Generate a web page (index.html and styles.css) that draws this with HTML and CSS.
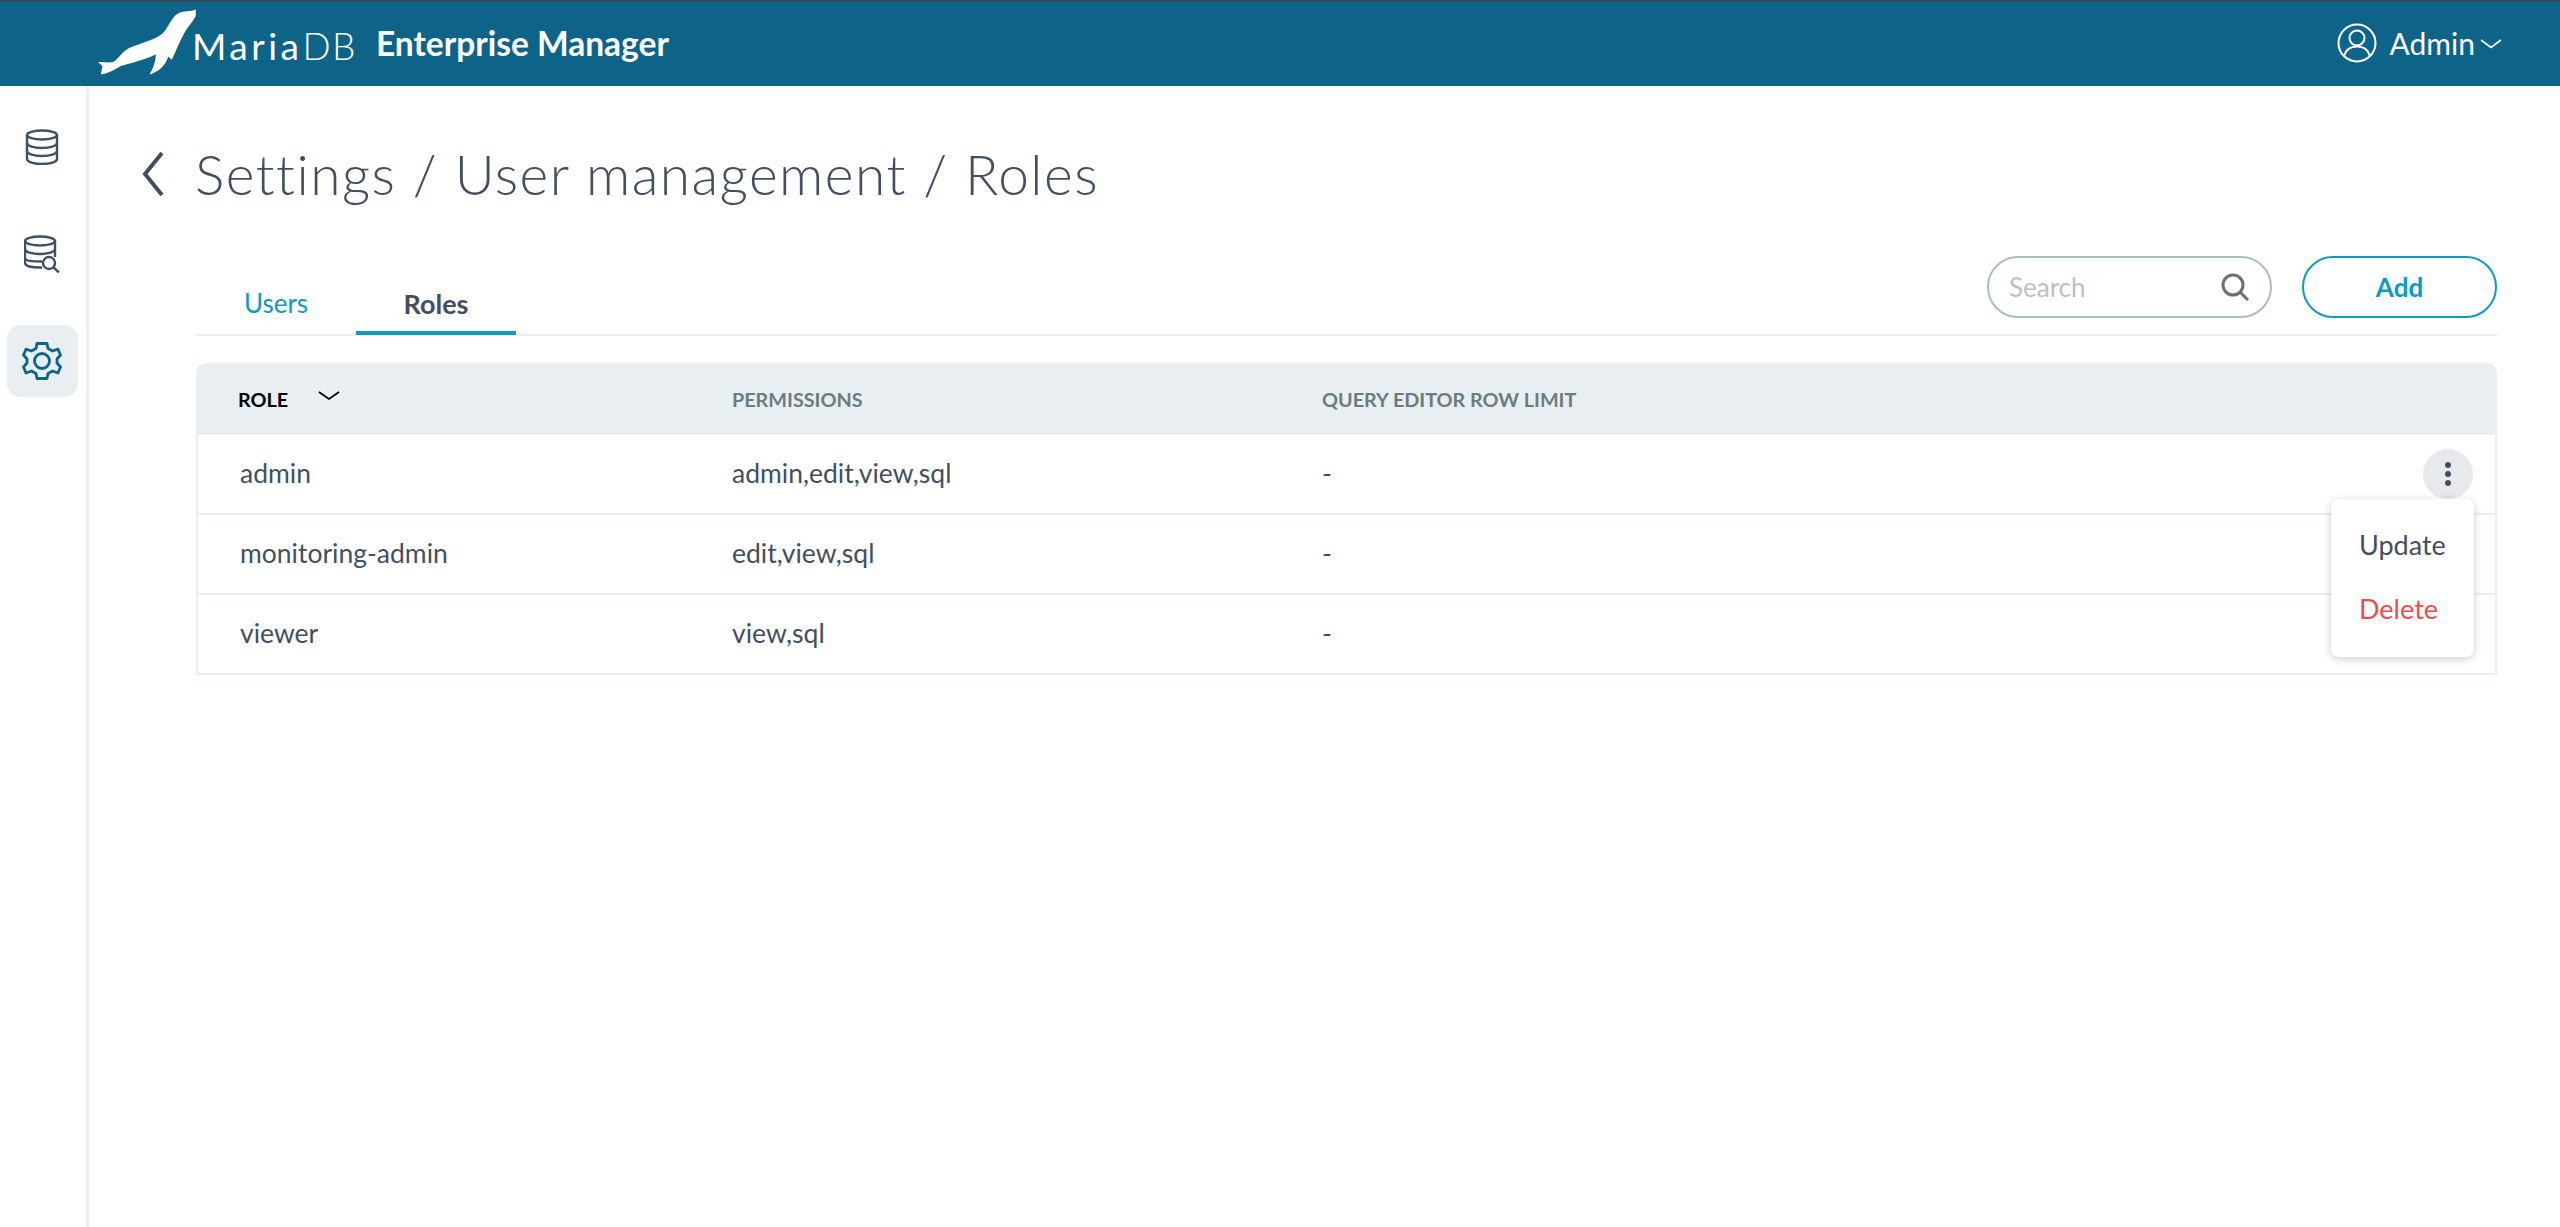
FILE: index.html
```html
<!DOCTYPE html>
<html lang="en">
<head>
    <meta charset="UTF-8">
    <meta name="viewport" content="width=device-width, initial-scale=1.0">
    <title>MariaDB Enterprise Manager</title>
    <link rel="stylesheet" href="styles.css">
</head>
<body>
    <header class="topbar">
        <div class="brand">
            <svg class="seal" viewBox="205 25 232 210" preserveAspectRatio="none">
                <path fill="#fff" d="M432 30C420 38 405 32 392 42C378 52 372 80 360 100C345 122 310 132 283 148C265 160 258 185 245 192C235 196 222 190 212 192L222 205L218 230C235 228 250 215 262 205C285 195 320 185 342 168C342 190 335 215 328 230C350 222 365 200 370 175L378 185C385 165 395 130 405 105C412 85 425 70 432 50Z"/>
            </svg>
            <span class="brand-name">Maria<span class="brand-db">DB</span></span>
            <span class="brand-product">Enterprise Manager</span>
        </div>
        <div class="account">
            <svg class="account-icon" viewBox="0 0 40 40" fill="none" stroke="#fff" stroke-width="2">
                <circle cx="20" cy="20" r="18.5"/>
                <circle cx="20" cy="15" r="7.5"/>
                <path d="M7 33C9 26 14 23.500 20 23.500C26 23.500 31 26 33 33"/>
            </svg>
            <span>Admin</span>
            <svg class="account-caret" viewBox="0 0 22 10" fill="none" stroke="#fff" stroke-width="1.600">
                <path d="M1 1L11 8.500L21 1"/>
            </svg>
        </div>
    </header>

    <div class="layout">
        <nav class="sidebar">
            <a class="nav-item">
                <svg width="34" height="36" viewBox="0 0 34 36" fill="none" stroke="#424f62" stroke-width="2.400">
                    <ellipse cx="17" cy="6" rx="15" ry="4.500"/>
                    <path d="M2 6V30C2 33 9 35 17 35C25 35 32 33 32 30V6"/>
                    <path d="M2 14C2 17 9 19 17 19C25 19 32 17 32 14"/>
                    <path d="M2 22C2 25 9 27 17 27C25 27 32 25 32 22"/>
                </svg>
            </a>
            <a class="nav-item">
                <svg width="36" height="38" viewBox="0 0 36 38" fill="none" stroke="#424f62" stroke-width="2.400">
                    <ellipse cx="16" cy="6" rx="15" ry="4.500"/>
                    <path d="M1 6V28C1 31 8 32.500 16 32.500H18M31 6V22"/>
                    <path d="M1 14C1 17 8 19 16 19C24 19 31 17 31 14"/>
                    <path d="M1 23C1 26 8 26.500 18 26.500"/>
                    <circle cx="25" cy="28" r="6" fill="#fff"/>
                    <path d="M29.500 32.500L35 37.500"/>
                </svg>
            </a>
            <a class="nav-item active">
                <svg width="40" height="40" viewBox="0 0 40 40" fill="none" stroke="#0e6488" stroke-width="2.800" stroke-linejoin="round">
                    <circle cx="20" cy="20" r="7.500"/>
                    <path d="M15 2.500H25L26 7.500L30.500 10L36 8.200L38.500 14L35 18V22L38.500 26L36 32L30.500 30L26 32.500L25 37.500H15L14 32.500L9.500 30L4 32L1.500 26L5 22V18L1.500 14L4 8.200L9.500 10L14 7.500Z"/>
                </svg>
            </a>
        </nav>

        <main class="content">
            <div class="page-title">
                <svg class="back" viewBox="0 0 22 46" fill="none" stroke="#424f62" stroke-width="4">
                    <path d="M20 2L3 23L20 44"/>
                </svg>
                <h1>Settings / User management / Roles</h1>
            </div>

            <div class="panel">
                <div class="toolbar">
                    <div class="tabs">
                        <a class="tab">Users</a>
                        <a class="tab tab-active">Roles</a>
                    </div>
                    <div class="actions">
                        <div class="search">
                            <span>Search</span>
                            <svg width="30" height="30" viewBox="0 0 30 30" fill="none" stroke="#6e6e6e" stroke-width="3">
                                <circle cx="13" cy="13" r="10"/>
                                <path d="M20.500 20.500L28 28"/>
                            </svg>
                        </div>
                        <button class="add-btn">Add</button>
                    </div>
                </div>

                <div class="table-wrap">
                    <table class="roles">
                        <thead>
                            <tr>
                                <th class="col-role sorted">ROLE
                                    <svg class="sort-icon" viewBox="0 0 22 10" fill="none" stroke="#000" stroke-width="1.800">
                                        <path d="M1 1L11 8L21 1"/>
                                    </svg>
                                </th>
                                <th class="col-perm">PERMISSIONS</th>
                                <th>QUERY EDITOR ROW LIMIT</th>
                                <th class="col-menu"></th>
                            </tr>
                        </thead>
                        <tbody>
                            <tr>
                                <td>admin</td>
                                <td>admin,edit,view,sql</td>
                                <td>-</td>
                                <td class="col-menu">
                                    <span class="kebab"><i></i><i></i><i></i></span>
                                </td>
                            </tr>
                            <tr>
                                <td>monitoring-admin</td>
                                <td>edit,view,sql</td>
                                <td>-</td>
                                <td></td>
                            </tr>
                            <tr>
                                <td>viewer</td>
                                <td>view,sql</td>
                                <td>-</td>
                                <td></td>
                            </tr>
                        </tbody>
                    </table>

                    <!-- open row menu -->
                    <div class="row-menu">
                        <a>Update</a>
                        <a class="danger">Delete</a>
                    </div>
                </div>
            </div>
        </main>
    </div>
</body>
</html>
```

FILE: styles.css
```css
* {
    box-sizing: border-box;
}

body {
    margin: 0;
    height: 100vh;
    overflow: hidden;
    font-family: Lato, "Open Sans", sans-serif;
    color: #424f62;
    background: #fff;
}

.topbar {
    display: flex;
    align-items: center;
    justify-content: space-between;
    height: 86px;
    padding: 0 58px 2px 95px;
    background: #0e6488;
    border-top: 2px solid #2f4a58;
    color: #fff;
}

.brand {
    display: flex;
    align-items: center;
}

.seal {
    width: 103px;
    height: 68px;
    margin-right: -6px;
    margin-top: -3px;
}

.brand-name {
    font-size: 37px;
    font-weight: 400;
    letter-spacing: 3.500px;
    margin-top: 4px;
}

.brand-db {
    font-weight: 300;
    letter-spacing: 1.500px;
}

.brand-product {
    margin-left: 19px;
    font-size: 33.500px;
    font-weight: 700;
}

.account {
    display: flex;
    align-items: center;
    font-size: 30px;
}

.account-icon {
    width: 40px;
    height: 40px;
    margin-right: 13px;
}

.account-caret {
    width: 22px;
    height: 10px;
    margin-left: 5px;
    margin-top: 2px;
}

.layout {
    display: flex;
    height: calc(100vh - 86px);
}

.sidebar {
    display: flex;
    flex-direction: column;
    align-items: center;
    width: 89px;
    padding: 25px 2px 0 0;
    border-right: 3px solid #e8eef1;
}

.nav-item {
    display: flex;
    align-items: center;
    justify-content: center;
    width: 71px;
    height: 72px;
    margin-bottom: 35px;
    border-radius: 14px;
}

.nav-item.active {
    background: #e8eef1;
}

.content {
    flex: 1;
    padding: 0 63px 0 53px;
}

.page-title {
    display: flex;
    align-items: center;
    height: 106px;
    margin-top: 35px;
}

.back {
    width: 22px;
    height: 46px;
    flex-shrink: 0;
}

h1 {
    margin: 0 0 0 31px;
    font-size: 55px;
    font-weight: 300;
    letter-spacing: 1.500px;
}

.panel {
    margin: 16px 0 0 54px;
}

.toolbar {
    display: flex;
    align-items: flex-end;
    justify-content: space-between;
    height: 93px;
    padding-top: 14px;
    border-bottom: 2px solid #e8eef1;
}

.tabs {
    display: flex;
    margin-bottom: -1px;
}

.tab {
    width: 160px;
    height: 60px;
    line-height: 57px;
    text-align: center;
    font-size: 26px;
    color: #0e9bc0;
}

.tab-active {
    font-size: 27px;
    font-weight: 700;
    color: #424f62;
    border-bottom: 4px solid #0e9bc0;
}

.actions {
    display: flex;
    gap: 30px;
    margin-bottom: 16px;
}

.search {
    display: flex;
    align-items: center;
    justify-content: space-between;
    width: 285px;
    height: 62px;
    padding: 0 20px;
    border: 2px solid #a9bdc6;
    border-radius: 31px;
    font-size: 26px;
    color: #bcc0c9;
}

.add-btn {
    width: 195px;
    height: 62px;
    border: 2px solid #0e9bc0;
    border-radius: 31px;
    background: #fff;
    font-family: inherit;
    font-size: 26px;
    font-weight: 700;
    color: #0e9bc0;
}

.table-wrap {
    position: relative;
    margin-top: 27px;
}

.roles {
    width: 100%;
    border-collapse: separate;
    border-spacing: 0;
    table-layout: fixed;
    font-size: 26.500px;
}

.roles th {
    height: 72px;
    padding: 0 0 0 42px;
    background: #e8eef1;
    text-align: left;
    font-size: 19.800px;
    font-weight: 700;
    color: #6c7c7f;
}

.roles th:first-child {
    border-top-left-radius: 10px;
}

.roles th:last-child {
    border-top-right-radius: 10px;
}

.roles th.sorted {
    color: #000;
}

.sort-icon {
    width: 22px;
    height: 10px;
    margin: 0 0 6px 25px;
}

.roles .col-role {
    width: 492px;
}

.roles .col-perm {
    width: 592px;
    padding-left: 44px;
}

.roles td {
    height: 80px;
    padding: 0 0 2px 42px;
    border-bottom: 2px solid #e8eef1;
}

.roles td:nth-child(2) {
    padding-left: 44px;
}

.roles td:first-child {
    border-left: 2px solid #e8eef1;
}

.roles td:last-child {
    border-right: 2px solid #e8eef1;
}

.roles .col-menu {
    width: 90px;
    padding: 0;
}

.kebab {
    display: flex;
    flex-direction: column;
    align-items: center;
    justify-content: center;
    gap: 3px;
    width: 50px;
    height: 50px;
    margin-left: 16px;
    border-radius: 50%;
    background: #e8e9ed;
}

.kebab i {
    width: 6px;
    height: 6px;
    border-radius: 50%;
    background: #424f62;
}

.row-menu {
    position: absolute;
    top: 136px;
    right: 23px;
    display: flex;
    flex-direction: column;
    width: 143px;
    height: 158px;
    padding: 14px 0 0 28px;
    border-radius: 8px;
    background: #fff;
    box-shadow: 0 2px 8px rgba(0, 0, 0, 0.2);
    font-size: 27px;
}

.row-menu a {
    height: 64px;
    line-height: 64px;
}

.row-menu .danger {
    color: #f04b4f;
}
```
